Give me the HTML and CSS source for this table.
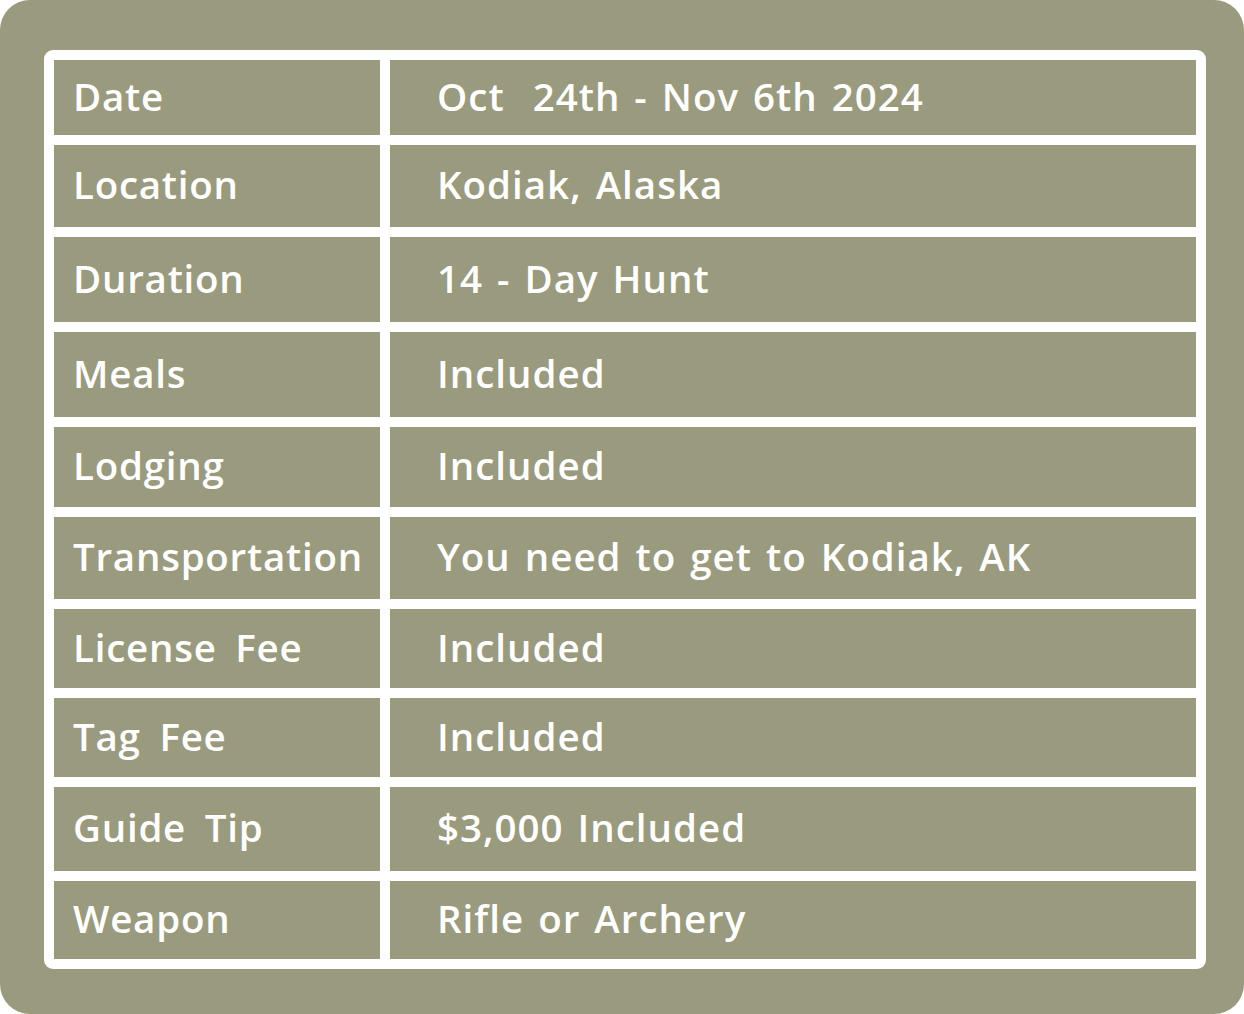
FILE: index.html
```html
<!DOCTYPE html>
<html lang="en">
<head>
<meta charset="utf-8">
<title>Hunt Details</title>
<link rel="stylesheet" href="styles.css">
</head>
<body>
<div class="panel">
  <div class="table">
    <div class="cell label">Date</div><div class="cell value">Oct&nbsp; 24th - Nov 6th 2024</div>
    <div class="cell label">Location</div><div class="cell value">Kodiak, Alaska</div>
    <div class="cell label">Duration</div><div class="cell value">14 - Day Hunt</div>
    <div class="cell label">Meals</div><div class="cell value">Included</div>
    <div class="cell label">Lodging</div><div class="cell value">Included</div>
    <div class="cell label">Transportation</div><div class="cell value">You need to get to Kodiak, AK</div>
    <div class="cell label">License Fee</div><div class="cell value">Included</div>
    <div class="cell label">Tag Fee</div><div class="cell value">Included</div>
    <div class="cell label">Guide Tip</div><div class="cell value">$3,000 Included</div>
    <div class="cell label">Weapon</div><div class="cell value">Rifle or Archery</div>
  </div>
</div>
</body>
</html>
```
FILE: styles.css
```css
html, body {
  margin: 0;
  padding: 0;
  background: #ffffff;
}
.panel {
  width: 1244px;
  height: 1014px;
  box-sizing: border-box;
  background: #9a9a7e;
  border-radius: 30px;
  padding: 50px 38px 0 44px;
}
.table {
  width: 1162px;
  box-sizing: border-box;
  background: #ffffff;
  border-radius: 9px;
  padding: 10px;
  display: grid;
  grid-template-columns: 326px 806px;
  grid-template-rows: 75px 82px 85px 85px 80px 82px 79px 79px 84px 78px;
  column-gap: 10px;
  row-gap: 10px;
}
.cell {
  background: #9a9a7e;
  color: #ffffff;
  font-family: "Open Sans", "Noto Sans", sans-serif;
  font-weight: 600;
  font-size: 38.5px;
  display: flex;
  align-items: center;
  white-space: nowrap;
  padding-bottom: 4px;
}
.label {
  padding-left: 19px;
  letter-spacing: 0.75px;
  word-spacing: 8px;
}
.value {
  padding-left: 47px;
  letter-spacing: 1px;
  word-spacing: 3px;
}
```
